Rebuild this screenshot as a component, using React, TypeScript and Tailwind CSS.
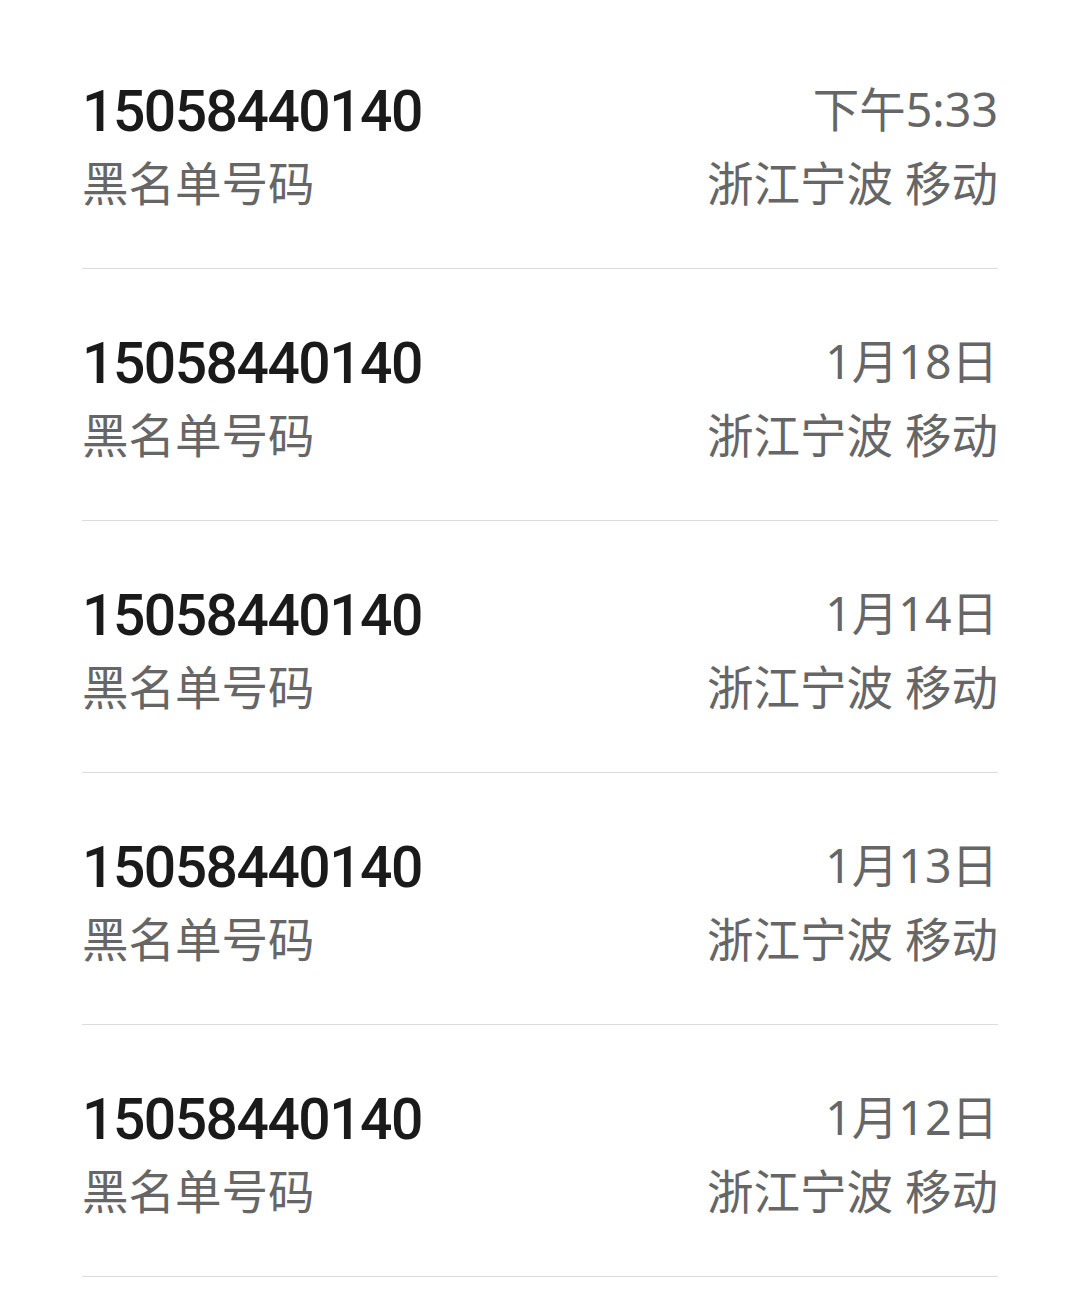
const calls = [
  { number: "15058440140", tag: "黑名单号码", time: "下午5:33", place: "浙江宁波 移动" },
  { number: "15058440140", tag: "黑名单号码", time: "1月18日", place: "浙江宁波 移动" },
  { number: "15058440140", tag: "黑名单号码", time: "1月14日", place: "浙江宁波 移动" },
  { number: "15058440140", tag: "黑名单号码", time: "1月13日", place: "浙江宁波 移动" },
  { number: "15058440140", tag: "黑名单号码", time: "1月12日", place: "浙江宁波 移动" },
];

export default function App() {
  return (
    <div className="min-h-screen bg-white font-['Noto_Sans','Noto_Sans_CJK_SC',sans-serif]">
      <ul className="px-[82px] pt-[17px]">
        {calls.map((c, i) => (
          <li
            key={i}
            className="flex justify-between border-b border-[#dcdcdc] pt-[55px] pb-[48px]"
          >
            {/* left: number + tag */}
            <div className="flex flex-col">
              <span className="h-[74px] font-['Roboto',sans-serif] text-[57px] leading-[80px] font-medium tracking-[-1.5px] text-[#1a1a1a]">
                {c.number}
              </span>
              <span className="h-[74px] text-[46.5px] leading-[74px] text-[#666666]">
                {c.tag}
              </span>
            </div>
            {/* right: time + location */}
            <div className="flex flex-col items-end">
              <span className="h-[74px] text-[46.5px] leading-[74px] text-[#666666]">
                {c.time}
              </span>
              <span className="h-[74px] text-[46.5px] leading-[74px] text-[#666666]">
                {c.place}
              </span>
            </div>
          </li>
        ))}
      </ul>
    </div>
  );
}
